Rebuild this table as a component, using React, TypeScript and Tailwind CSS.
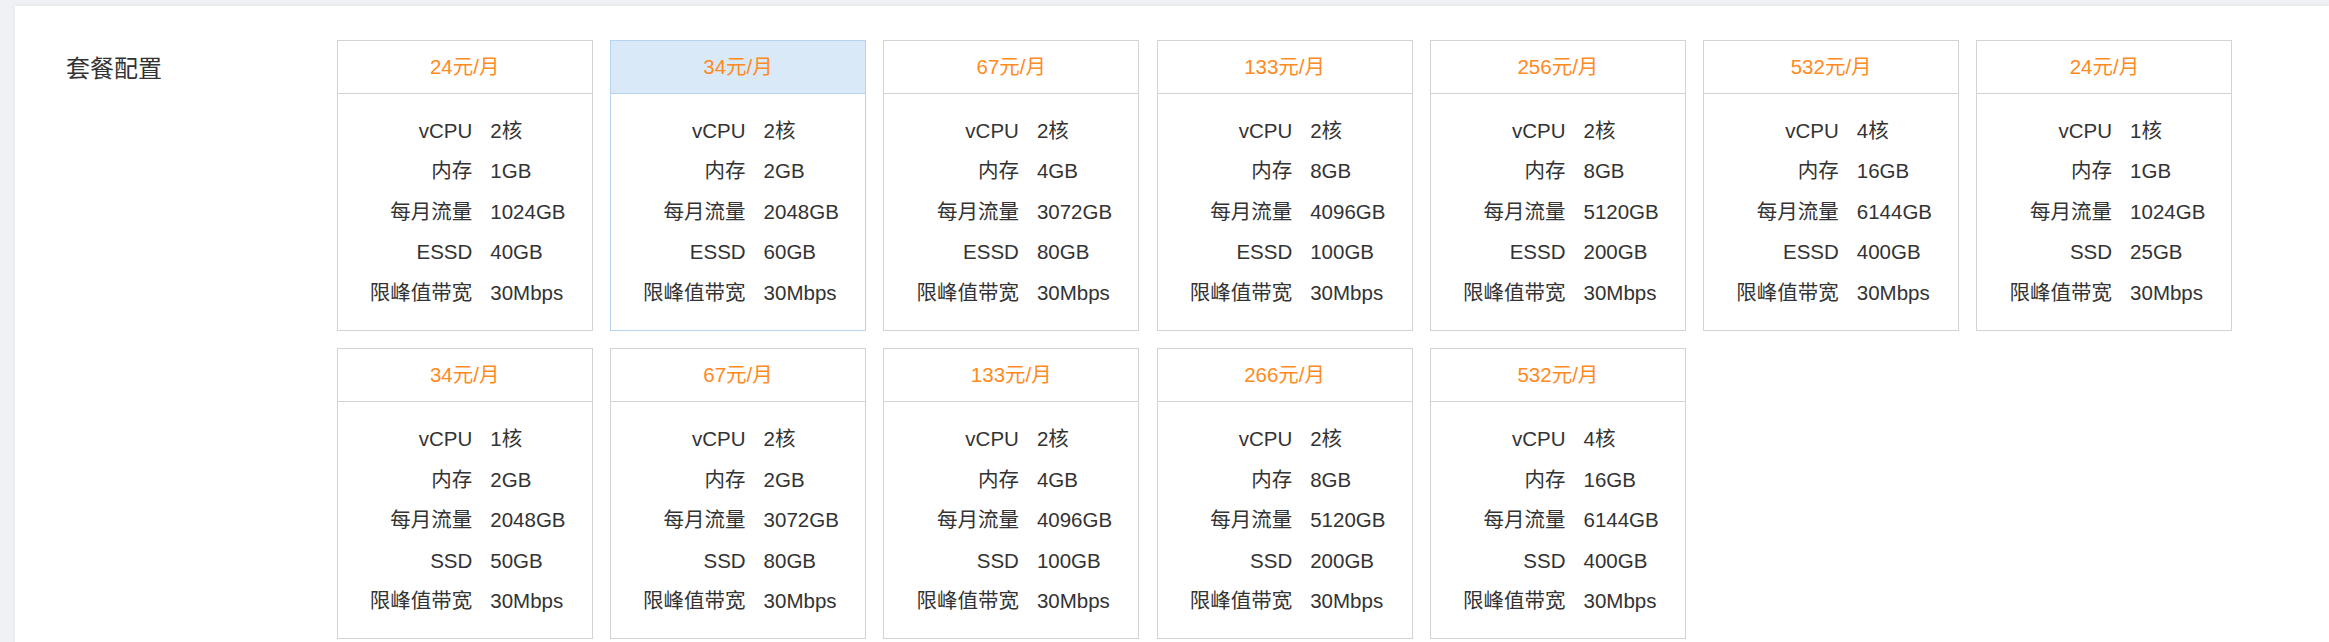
import React from "react";

type Plan = {
  price: string;
  cpu: string;
  mem: string;
  traffic: string;
  diskType: string;
  disk: string;
  bw: string;
  selected?: boolean;
};

const plans: Plan[] = [
  { price: "24元/月", cpu: "2核", mem: "1GB", traffic: "1024GB", diskType: "ESSD", disk: "40GB", bw: "30Mbps" },
  { price: "34元/月", cpu: "2核", mem: "2GB", traffic: "2048GB", diskType: "ESSD", disk: "60GB", bw: "30Mbps", selected: true },
  { price: "67元/月", cpu: "2核", mem: "4GB", traffic: "3072GB", diskType: "ESSD", disk: "80GB", bw: "30Mbps" },
  { price: "133元/月", cpu: "2核", mem: "8GB", traffic: "4096GB", diskType: "ESSD", disk: "100GB", bw: "30Mbps" },
  { price: "256元/月", cpu: "2核", mem: "8GB", traffic: "5120GB", diskType: "ESSD", disk: "200GB", bw: "30Mbps" },
  { price: "532元/月", cpu: "4核", mem: "16GB", traffic: "6144GB", diskType: "ESSD", disk: "400GB", bw: "30Mbps" },
  { price: "24元/月", cpu: "1核", mem: "1GB", traffic: "1024GB", diskType: "SSD", disk: "25GB", bw: "30Mbps" },
  { price: "34元/月", cpu: "1核", mem: "2GB", traffic: "2048GB", diskType: "SSD", disk: "50GB", bw: "30Mbps" },
  { price: "67元/月", cpu: "2核", mem: "2GB", traffic: "3072GB", diskType: "SSD", disk: "80GB", bw: "30Mbps" },
  { price: "133元/月", cpu: "2核", mem: "4GB", traffic: "4096GB", diskType: "SSD", disk: "100GB", bw: "30Mbps" },
  { price: "266元/月", cpu: "2核", mem: "8GB", traffic: "5120GB", diskType: "SSD", disk: "200GB", bw: "30Mbps" },
  { price: "532元/月", cpu: "4核", mem: "16GB", traffic: "6144GB", diskType: "SSD", disk: "400GB", bw: "30Mbps" },
];

function Card({ p }: { p: Plan }) {
  const rows: [string, string][] = [
    ["vCPU", p.cpu],
    ["内存", p.mem],
    ["每月流量", p.traffic],
    [p.diskType, p.disk],
    ["限峰值带宽", p.bw],
  ];
  return (
    <div
      className={
        p.selected
          ? "w-[256px] border border-[#b3d5f1] bg-white"
          : "w-[256px] border border-[#d3d3d3] bg-white"
      }
    >
      <div
        className={
          p.selected
            ? "h-[53px] flex items-center justify-center text-[20.5px] text-[#ff8a1e] bg-[#d9e9f7] border-b border-[#b3d5f1]"
            : "h-[53px] flex items-center justify-center text-[20.5px] text-[#ff8a1e] border-b border-[#d3d3d3]"
        }
      >
        {p.price}
      </div>
      <div className="pt-[17px] pb-[17px] pl-[6px] grid grid-cols-[auto_auto] justify-center gap-x-[18px] text-[20.5px] leading-[40.4px] text-[#333]">
        {rows.map(([k, v], i) => (
          <React.Fragment key={i}>
            <div className="text-right">{k}</div>
            <div className="text-left">{v}</div>
          </React.Fragment>
        ))}
      </div>
    </div>
  );
}

export default function App() {
  return (
    <div
      className="min-h-[642px] bg-[#eff1f4] pt-[6px] pl-[15px]"
      style={{ fontFamily: '"Liberation Sans", Arial, "Noto Sans CJK SC", sans-serif' }}
    >
      <div className="bg-white min-h-[700px] shadow-[0_0_5px_rgba(0,0,0,0.06)] flex pt-[34px]">
        <div className="w-[321.7px] shrink-0 pl-[51px] pt-[17px]">
          <div className="text-[24px] leading-[24px] text-[#333]">套餐配置</div>
        </div>
        <div className="grid grid-cols-[repeat(7,256px)] gap-[17.3px] content-start">
          {plans.map((p, i) => (
            <Card key={i} p={p} />
          ))}
        </div>
      </div>
    </div>
  );
}
